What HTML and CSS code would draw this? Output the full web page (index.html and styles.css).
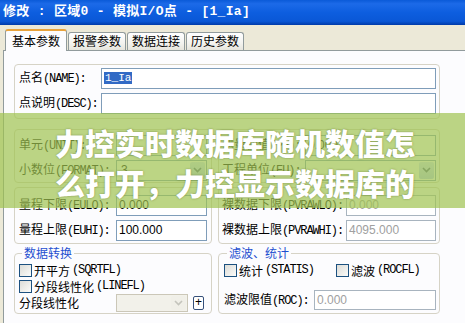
FILE: index.html
```html
<!DOCTYPE html>
<html lang="zh-CN">
<head>
    <meta charset="UTF-8">
    <title>修改 : 区域0 - 模拟I/O点 - [1_Ia]</title>
    <link rel="stylesheet" href="styles.css">
</head>
<body>
<div class="window">
    <div class="titlebar">修改 : 区域0 - 模拟I/O点 - [1_Ia]</div>

    <div class="client">
        <div class="tabs">
            <div class="tab active">基本参数</div>
            <div class="tab">报警参数</div>
            <div class="tab">数据连接</div>
            <div class="tab">历史参数</div>
        </div>

        <div class="panel">
            <div class="groups">
                <div class="box box-name">
                    <div class="row">
                        <label class="lbl w82">点名<span class="en">(NAME):</span></label>
                        <div class="input wide"><span class="sel">1_Ia</span></div>
                    </div>
                    <div class="row">
                        <label class="lbl w82">点说明<span class="en">(DESC):</span></label>
                        <div class="input wide"></div>
                    </div>
                </div>

                <div class="pair pair-unit">
                    <div class="box left">
                        <div class="row">
                            <label class="lbl w97">单元<span class="en">(UNIT):</span></label>
                            <div class="input w91"></div>
                        </div>
                        <div class="row">
                            <label class="lbl w97">小数位<span class="en">(FORMAT):</span></label>
                            <div class="select w91"><span class="val">3</span><span class="drop"><svg width="9" height="6" viewBox="0 0 9 6"><path d="M1 1l3.5 3.5L8 1" fill="none" stroke="#4d6185" stroke-width="1.6"/></svg></span></div>
                        </div>
                    </div>
                    <div class="box right">
                        <div class="row">
                            <label class="lbl w83">测量初值<span class="en">(PV):</span></label>
                            <div class="input w131 num">0.000</div>
                        </div>
                        <div class="row">
                            <label class="lbl w83">工程单位<span class="en">(EU):</span></label>
                            <div class="select w131"><span class="val"></span><span class="drop"><svg width="9" height="6" viewBox="0 0 9 6"><path d="M1 1l3.5 3.5L8 1" fill="none" stroke="#4d6185" stroke-width="1.6"/></svg></span></div>
                        </div>
                    </div>
                </div>

                <div class="pair pair-range">
                    <div class="box left">
                        <div class="row">
                            <label class="lbl w97">量程下限<span class="en">(EULO):</span></label>
                            <div class="input w91 num">0.000</div>
                        </div>
                        <div class="row">
                            <label class="lbl w97">量程上限<span class="en">(EUHI):</span></label>
                            <div class="input w91 num">100.000</div>
                        </div>
                    </div>
                    <div class="box right">
                        <div class="row">
                            <label class="lbl w124">裸数据下限<span class="en">(PVRAWLO):</span></label>
                            <div class="input w90 num off">0.000</div>
                        </div>
                        <div class="row">
                            <label class="lbl w124">裸数据上限<span class="en">(PVRAWHI):</span></label>
                            <div class="input w90 num off">4095.000</div>
                        </div>
                    </div>
                </div>

                <div class="pair pair-sets">
                    <fieldset class="set left">
                        <legend>数据转换</legend>
                        <div class="check"><span class="cb"></span>开平方<span class="en">(SQRTFL)</span></div>
                        <div class="check"><span class="cb"></span>分段线性化<span class="en">(LINEFL)</span></div>
                        <div class="row">
                            <label class="lbl w97">分段线性化</label>
                            <div class="select w72 off"><span class="val"></span><span class="drop"><svg width="9" height="6" viewBox="0 0 9 6"><path d="M1 1l3.5 3.5L8 1" fill="none" stroke="#c4c4bc" stroke-width="1.6"/></svg></span></div>
                            <span class="plus">+</span>
                        </div>
                    </fieldset>
                    <fieldset class="set right">
                        <legend>滤波、统计</legend>
                        <div class="checks">
                            <div class="check w112"><span class="cb"></span>统计<span class="en">(STATIS)</span></div>
                            <div class="check"><span class="cb"></span>滤波<span class="en">(ROCFL)</span></div>
                        </div>
                        <div class="row roc">
                            <label class="lbl w90">滤波限值<span class="en">(ROC):</span></label>
                            <div class="input w124 num off">0.000</div>
                        </div>
                    </fieldset>
                </div>
            </div>
        </div>
    </div>

    <div class="banner">
        <p>力控实时数据库随机数值怎<br>么打开，力控显示数据库的</p>
    </div>
</div>
</body>
</html>
```

FILE: styles.css
```css
body {
    margin: 0;
    font-family: "Noto Sans CJK SC", sans-serif;
    font-size: 12px;
    color: #000;
}
.window {
    position: relative;
    width: 465px;
    height: 323px;
    overflow: hidden;
    background: #ece9d8;
}
.titlebar {
    height: 25px;
    box-sizing: border-box;
    padding: 3px 0 0 3px;
    color: #fff;
    font-family: "Liberation Mono", "Noto Sans CJK SC", monospace;
    font-weight: bold;
    font-size: 13px;
    line-height: 18px;
    white-space: pre;
    letter-spacing: 0.3px;
    background: linear-gradient(#0a5ad8, #1c6ae8 15%, #0d5edf 50%, #0a57d6 85%, #003aa8);
}
.client {
    overflow: hidden;
}
.tabs {
    display: flex;
    align-items: flex-end;
    gap: 1px;
    padding: 4px 0 0 5px;
    height: 21px;
}
.tab {
    height: 18px;
    box-sizing: border-box;
    padding: 0 4px;
    line-height: 16px;
    border: 1px solid #919b9c;
    border-bottom: none;
    border-radius: 3px 3px 0 0;
    background: linear-gradient(#ffffff, #f3f3ef 60%, #e6e5dc);
}
.tab.active {
    height: 22px;
    padding: 0 6px;
    margin-bottom: -1px;
    line-height: 19px;
    border-top: 2px solid #e8a33c;
    background: #fcfcfe;
    position: relative;
}
.panel {
    margin: 0 -10px 0 3px;
    height: 280px;
    border: 1px solid #919b9c;
    background: #fcfcfe;
    padding: 13px 0 0 10px;
}
.groups {
    width: 426px;
}
.en {
    font-family: "Liberation Mono", monospace;
    font-size: 12px;
    letter-spacing: -1.1px;
}
.box, .set {
    box-sizing: border-box;
    border: 1px solid #d6d3c6;
    border-radius: 4px;
}
.box-name {
    height: 55px;
    padding: 2px 3px 0 4px;
    display: flex;
    flex-direction: column;
    gap: 3px;
}
.pair {
    display: flex;
    gap: 6px;
}
.pair .left {
    width: 198px;
    padding-left: 4px;
}
.pair .right {
    width: 222px;
    padding-left: 3px;
}
.pair-unit {
    margin-top: 10px;
}
.pair-unit .box {
    height: 54px;
    padding-top: 4px;
    display: flex;
    flex-direction: column;
    gap: 3px;
}
.pair-range {
    margin-top: 4px;
}
.pair-range .box {
    height: 57px;
    padding-top: 6px;
    display: flex;
    flex-direction: column;
    gap: 3px;
}
.row {
    display: flex;
    align-items: center;
}
.lbl {
    flex: none;
    white-space: nowrap;
    line-height: 20px;
}
.w82 { width: 82px; }
.w83 { width: 83px; }
.w90 { width: 90px; }
.w97 { width: 97px; }
.w124 { width: 124px; }
.input, .select {
    box-sizing: border-box;
    height: 21px;
    border: 1px solid #7f9db9;
    background: #fff;
    padding-left: 2px;
    line-height: 19px;
    font-family: "Liberation Sans", sans-serif;
    font-size: 12px;
}
.input.wide { width: 335px; font-family: "Liberation Mono", monospace; font-size: 11px; }
.input.w91, .select.w91 { width: 91px; }
.input.w90 { width: 90px; }
.input.w124 { width: 124px; }
.input.w131, .select.w131 { width: 131px; }
.input.off {
    border-color: #a8b4bf;
    color: #a0a0a0;
}
.sel {
    background: #316ac5;
    color: #fff;
    padding: 0 1px;
}
.select {
    display: flex;
    align-items: center;
    justify-content: space-between;
    padding: 0 1px 0 4px;
}
.drop {
    width: 15px;
    height: 17px;
    border-radius: 2px;
    background: linear-gradient(#d6e3fd, #b6caf6);
    display: flex;
    align-items: center;
    justify-content: center;
}
.select.off {
    width: 72px;
    height: 18px;
    border-color: #cbc7b8;
    background: #f2f1ea;
}
.select.off .drop {
    height: 14px;
    background: #f0efe8;
}
.plus {
    box-sizing: border-box;
    width: 11px;
    height: 14px;
    margin-left: 5px;
    border: 1px solid #36507a;
    border-radius: 2px;
    font-family: "Liberation Sans", sans-serif;
    font-size: 12px;
    line-height: 11px;
    text-align: center;
    background: #fff;
}
.pair-sets {
    margin-top: 2px;
}
.set {
    margin: 0;
    min-width: 0;
    height: 68px;
    padding: 2px 3px 0 5px;
}
.set.right {
    padding-left: 5px;
}
legend {
    color: #1f4fd0;
    padding: 0 2px;
    margin-left: 3px;
    line-height: 14px;
}
.check {
    display: flex;
    align-items: center;
    gap: 2px;
    height: 16px;
}
.checks {
    display: flex;
}
.check.w112 { width: 112px; }
.cb {
    box-sizing: border-box;
    width: 13px;
    height: 13px;
    border: 1px solid #1c5180;
    background: linear-gradient(135deg, #dcdcd7, #fbfbf9);
}
.set .row {
    height: 18px;
}
.set.left .lbl {
    width: 97px;
}
.set .roc {
    margin-top: 12px;
    height: 20px;
}
.roc .input {
    height: 20px;
}
.banner {
    position: absolute;
    left: 0;
    right: 0;
    top: 113px;
    height: 95px;
    background: rgba(160, 195, 80, 0.7);
}
.banner p {
    margin: 0;
    padding: 9px 0 0 55px;
    color: #fff;
    font-weight: 900;
    font-size: 30px;
    line-height: 40px;
    text-shadow: 0 0 2px rgba(70, 90, 30, 0.6);
}
```
